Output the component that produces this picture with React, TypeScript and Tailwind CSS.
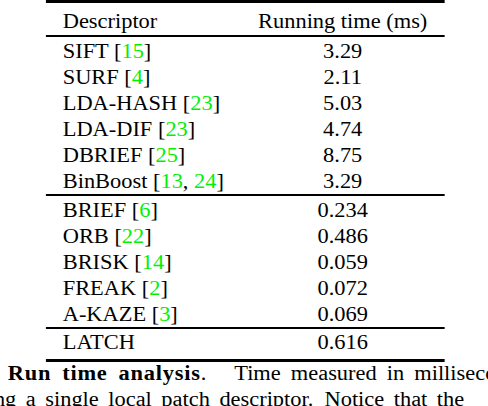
const firstGroup = [
  { name: "SIFT", refs: ["15"], time: "3.29" },
  { name: "SURF", refs: ["4"], time: "2.11" },
  { name: "LDA-HASH", refs: ["23"], time: "5.03" },
  { name: "LDA-DIF", refs: ["23"], time: "4.74" },
  { name: "DBRIEF", refs: ["25"], time: "8.75" },
  { name: "BinBoost", refs: ["13", "24"], time: "3.29" },
];

const secondGroup = [
  { name: "BRIEF", refs: ["6"], time: "0.234" },
  { name: "ORB", refs: ["22"], time: "0.486" },
  { name: "BRISK", refs: ["14"], time: "0.059" },
  { name: "FREAK", refs: ["2"], time: "0.072" },
  { name: "A-KAZE", refs: ["3"], time: "0.069" },
];

type Row = { name: string; refs: string[]; time: string };

function Cite({ refs }: { refs: string[] }) {
  return (
    <>
      {" "}[
      {refs.map((r, i) => (
        <span key={r}>
          {i > 0 && ", "}
          <span className="text-[#00f000]">{r}</span>
        </span>
      ))}
      ]
    </>
  );
}

function TableRow({ row }: { row: Row }) {
  return (
    <div className="grid grid-cols-[174px_1fr] h-[26px] leading-[26px]">
      <div className="px-[15px] whitespace-nowrap">
        {row.name}
        {row.refs.length > 0 && <Cite refs={row.refs} />}
      </div>
      <div className="text-center">{row.time}</div>
    </div>
  );
}

export default function App() {
  return (
    <div className="w-[488px] h-[406px] overflow-hidden bg-white text-black font-['Liberation_Serif','Times_New_Roman',serif]">
      <div className="w-[436px] origin-left scale-x-[1.12] text-[20px]">
        {/* table */}
        <div className="ml-[41px] w-[356px] border-t-[3px] border-b-[3px] border-black pb-[4px]">
          <div className="grid grid-cols-[174px_1fr] pt-[5px] pb-[1px] leading-[26px] border-b-2 border-black">
            <div className="px-[15px]">Descriptor</div>
            <div className="text-center whitespace-nowrap">Running time (ms)</div>
          </div>
          <div className="pt-[1px] border-b-2 border-black">
            {firstGroup.map((r) => (
              <TableRow key={r.name} row={r} />
            ))}
          </div>
          <div className="pt-[1px] border-b-2 border-black">
            {secondGroup.map((r) => (
              <TableRow key={r.name} row={r} />
            ))}
          </div>
          <TableRow row={{ name: "LATCH", refs: [], time: "0.616" }} />
        </div>

        {/* caption, justified like the paper so the spaces are wide */}
        <div className="mt-[-2px] leading-[26px] whitespace-nowrap">
          <div className="pl-[7px] [word-spacing:4px]">
            <span className="font-bold tracking-[0.7px]">Run time analysis</span>.
            <span className="ml-[25px]">Time measured in milliseconds for computing</span>
          </div>
          <div className="ml-[-71px] [word-spacing:3.5px]">
            computing a single local patch descriptor.
            <span className="ml-[10px]">Notice that the</span>
          </div>
        </div>
      </div>
    </div>
  );
}
